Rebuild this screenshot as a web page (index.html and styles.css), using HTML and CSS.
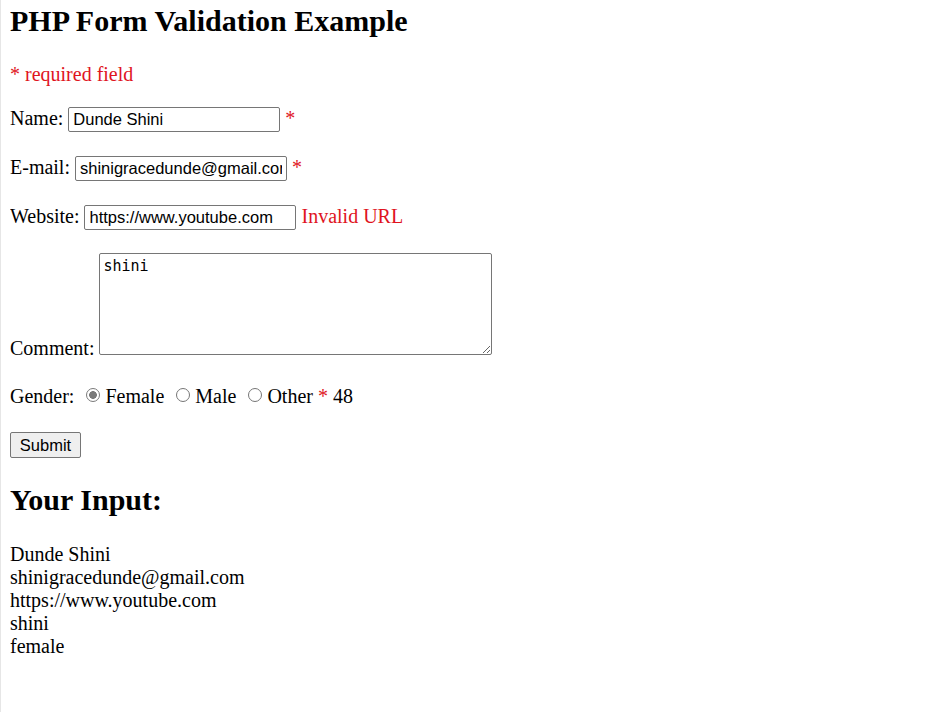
FILE: index.html
```html
<!DOCTYPE html>
<html>
<head>
<meta charset="utf-8">
<title>PHP Form Validation Example</title>
<link rel="stylesheet" href="styles.css">
</head>
<body>
<h2 class="title">PHP Form Validation Example</h2>
<p class="note"><span class="error">* required field</span></p>
<form class="form">
  Name: <input class="field" type="text" name="name" value="Dunde Shini"> <span class="error">*</span>
  <br><br>
  E-mail: <input class="field" type="text" name="email" value="shinigracedunde@gmail.com"> <span class="error">*</span>
  <br><br>
  Website: <input class="field" type="text" name="website" value="https://www.youtube.com"> <span class="error">Invalid URL</span>
  <br><br>
  Comment: <textarea class="comment" name="comment">shini</textarea>
  <br><br>
  Gender:
  <input class="radio" type="radio" name="gender" value="female" checked>Female
  <input class="radio" type="radio" name="gender" value="male">Male
  <input class="radio" type="radio" name="gender" value="other">Other
  <span class="error">*</span> 48
  <br><br>
  <input class="submit" type="submit" name="submit" value="Submit">
</form>
<h2 class="title title-sub">Your Input:</h2>
<div class="output">Dunde Shini<br>shinigracedunde@gmail.com<br>https://www.youtube.com<br>shini<br>female</div>
</body>
</html>
```
FILE: styles.css
```css
html {
  border-left: 1px solid #e6e6e6;
  background: #fff;
  min-height: 100%;
  box-sizing: border-box;
}
body {
  margin: 4px 10px 10px 9px;
  font-family: "Liberation Serif", "Times New Roman", serif;
  font-size: 20px;
  color: #000;
}
.title {
  font-size: 30px;
  font-weight: bold;
  margin: 0 0 25px;
}
.title-sub {
  margin-top: 25px;
  margin-bottom: 26px;
}
.note {
  margin: 0 0 21px;
}
.error {
  color: #e0141e;
}
.form {
  margin: 0;
  line-height: 23.75px;
}
.field {
  font-family: "Liberation Sans", Arial, sans-serif;
  font-size: 16.5px;
  width: 212px;
  height: 25px;
  box-sizing: border-box;
  padding: 1px 4px;
  border: 1px solid #767676;
  border-radius: 2px;
  color: #000;
  margin: 0;
}
.comment {
  font-family: "DejaVu Sans Mono", "Liberation Mono", monospace;
  font-size: 15px;
  line-height: normal;
  width: 393px;
  height: 102px;
  box-sizing: border-box;
  padding: 3px 3px;
  border: 1px solid #767676;
  border-radius: 2px;
  margin: 0;
  resize: both;
  color: #000;
}
.radio {
  appearance: none;
  -webkit-appearance: none;
  width: 14px;
  height: 14px;
  border: 1px solid #767676;
  border-radius: 50%;
  margin: 0 5px 0 7px;
  box-sizing: border-box;
  vertical-align: 1px;
  background: #fff;
}
.radio:checked {
  background: radial-gradient(circle, #7a7a7a 0 3.6px, #fff 4.1px);
  border-color: #7a7a7a;
}
.submit {
  font-family: "Liberation Sans", Arial, sans-serif;
  font-size: 16.5px;
  width: 71px;
  height: 26px;
  box-sizing: border-box;
  padding: 0;
  background: #efefef;
  border: 1px solid #767676;
  border-radius: 2px;
  color: #000;
  margin: 0;
}
.output {
  line-height: 23px;
}
```
